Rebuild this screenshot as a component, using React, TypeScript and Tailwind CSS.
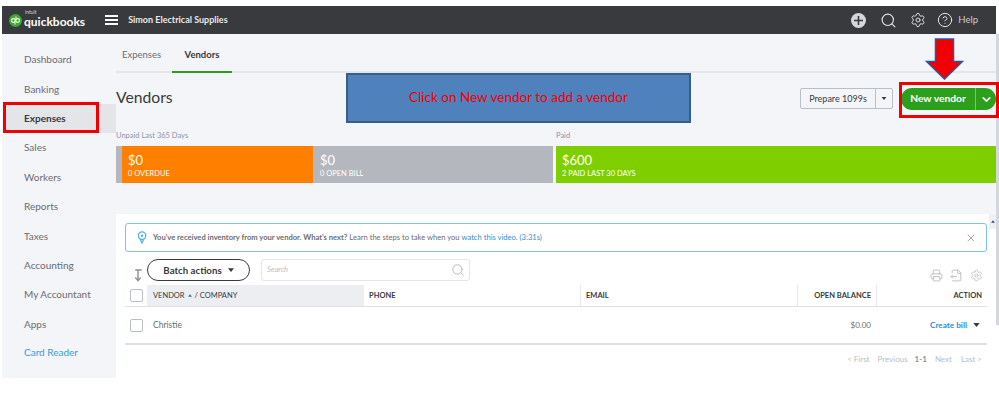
import { Search, Settings, CircleHelp, Printer, FileOutput, X, ChevronDown } from 'lucide-react';

const NAV_ITEMS = ['Dashboard', 'Banking', 'Expenses', 'Sales', 'Workers', 'Reports', 'Taxes', 'Accounting', 'My Accountant', 'Apps'];

const Caret = ({ className }: { className?: string }) => (
  <svg viewBox="0 0 8 5" className={className} fill="currentColor">
    <path d="M0 0h8L4 5z" />
  </svg>
);

const QbLogo = () => (
  <svg viewBox="0 0 16 16" className="h-[13px] w-[13px]">
    <circle cx="8" cy="8" r="8" fill="#3dab2b" />
    <circle cx="5.4" cy="8" r="2.3" fill="none" stroke="#fff" strokeWidth="1.3" />
    <circle cx="10.6" cy="8" r="2.3" fill="none" stroke="#fff" strokeWidth="1.3" />
    <path d="M7.4 8v5M8.6 3v5" stroke="#fff" strokeWidth="1.2" />
  </svg>
);

const PinIcon = () => (
  <svg viewBox="0 0 10 14" className="h-[13px] w-[10px]" fill="none" stroke="#4cb2ea" strokeWidth="1.3">
    <circle cx="5" cy="5" r="4" />
    <circle cx="5" cy="5" r="1.3" fill="#4cb2ea" stroke="none" />
    <path d="M3 8.5 5 13l2-4.5" />
  </svg>
);

const TopBar = () => (
  <header className="flex h-[28px] w-[994px] items-center bg-[#393a3d] text-white">
    <div className="ml-[7px] flex items-center">
      <QbLogo />
      <div className="-mt-[3px] ml-[2px] flex flex-col">
        <span className="ml-[1px] text-[5px] leading-[6px] text-[#d4d7dc]">intuit</span>
        <span className="text-[12px] leading-[14px] font-bold">quickbooks</span>
      </div>
    </div>
    <div className="ml-[20px] flex w-[13px] flex-col gap-[2px]">
      <span className="h-[2px] bg-white" />
      <span className="h-[2px] bg-white" />
      <span className="h-[2px] bg-white" />
    </div>
    <span className="ml-[10px] text-[9px] font-bold text-[#e8e9eb]">Simon Electrical Supplies</span>
    <div className="ml-auto flex items-center text-[#e3e5e8]">
      <span className="flex h-[15px] w-[15px] items-center justify-center rounded-full bg-[#d4d7dc]">
        <svg viewBox="0 0 9 9" className="h-[9px] w-[9px]">
          <path d="M4.5 0v9M0 4.5h9" stroke="#393a3d" strokeWidth="1.6" />
        </svg>
      </span>
      <Search className="ml-[14px] h-[17px] w-[17px]" strokeWidth={1.6} />
      <Settings className="ml-[13px] h-[16px] w-[16px]" strokeWidth={1.4} />
      <CircleHelp className="ml-[11px] h-[16px] w-[16px]" strokeWidth={1.5} />
      <span className="mr-[18px] ml-[5px] text-[9.5px] text-[#c9ccd1]">Help</span>
    </div>
  </header>
);

const Sidebar = () => (
  <aside className="h-[344px] w-[114px] shrink-0 bg-[#f4f5f8] pt-[11px] text-[10px] text-[#6b6c72]">
    {NAV_ITEMS.map((item) => (
      <div
        key={item}
        className={
          item === 'Expenses'
            ? 'ml-[2px] flex h-[29.4px] items-center bg-[#e3e5e8] pl-[20px] font-bold text-[#393a3d]'
            : 'flex h-[29.4px] items-center pl-[22px]'
        }
      >
        {item}
      </div>
    ))}
    <div className="flex h-[27px] items-center pl-[22px] text-[#3b99d9]">Card Reader</div>
  </aside>
);

const SummaryBars = () => (
  <div className="flex h-[37px] text-white">
    <div className="w-[6px] bg-[#b4b8be]" />
    <div className="w-[191px] bg-[#ff8000] pl-[6px]">
      <div className="pt-[6px] text-[13px] leading-[16px]">$0</div>
      <div className="text-[7.5px] leading-[11px]">0 OVERDUE</div>
    </div>
    <div className="w-[240px] bg-[#b4b8be] pl-[7px]">
      <div className="pt-[6px] text-[13px] leading-[16px]">$0</div>
      <div className="text-[7.5px] leading-[11px]">0 OPEN BILL</div>
    </div>
    <div className="ml-[3px] flex-1 bg-[#7fcf00] pl-[6px]">
      <div className="pt-[6px] text-[13px] leading-[16px]">$600</div>
      <div className="text-[7.5px] leading-[11px]">2 PAID LAST 30 DAYS</div>
    </div>
  </div>
);

const Checkbox = () => <span className="h-[13px] w-[13px] rounded-[2px] border border-[#babec5] bg-white" />;

const VendorTable = () => (
  <section className="h-[194px] w-[873px] shrink-0 bg-white pt-[9px]">
    <div className="ml-[9px] flex h-[29px] w-[862px] items-center rounded-[3px] border border-[#7cc4ef] pr-[9px] pl-[11px] text-[7.6px] text-[#6b6c72]">
      <PinIcon />
      <span className="ml-[6px] font-bold">You've received inventory from your vendor. What's next?</span>
      <span className="ml-[2px]">Learn the steps to take when you</span>
      <span className="ml-[2px] text-[#2f8fd1]">watch this video. (3:31s)</span>
      <X className="ml-auto h-[12px] w-[12px] text-[#8d9096]" strokeWidth={1.6} />
    </div>

    <div className="mt-[7px] flex h-[22px] items-start pl-[17px]">
      <svg viewBox="0 0 10 14" className="mt-[10px] h-[13px] w-[10px]" fill="none" stroke="#8d9096" strokeWidth="1.5">
        <path d="M2 1h7M5 1v11M2 9l3 3.5L8 9" />
      </svg>
      <div className="ml-[4px] flex h-[22px] w-[103px] items-center justify-center gap-[6px] rounded-full border border-[#393a3d] text-[9.7px] font-bold text-[#393a3d]">
        Batch actions
        <Caret className="h-[4px] w-[6px]" />
      </div>
      <div className="ml-[11px] flex h-[22px] w-[209px] items-center justify-between rounded-[3px] border border-[#e3e5e8] pr-[4px] pl-[5px] text-[7.5px] text-[#babec5] italic">
        Search
        <Search className="h-[14px] w-[14px] text-[#a8acb3]" strokeWidth={1.4} />
      </div>
      <div className="mt-[10px] mr-[6px] ml-auto flex gap-[7px] text-[#b4b8be]">
        <Printer className="h-[13px] w-[13px]" strokeWidth={1.6} />
        <FileOutput className="h-[13px] w-[13px]" strokeWidth={1.6} />
        <Settings className="h-[13px] w-[13px]" strokeWidth={1.4} />
      </div>
    </div>

    <div className="mt-[4px] ml-[9px] w-[862px]">
      <div className="grid h-[22px] grid-cols-[22px_217px_216px_217px_79px_111px] items-center border-b border-[#dfe1e5] text-[7.5px] font-bold text-[#393a3d]">
        <span className="flex pl-[5px]"><Checkbox /></span>
        <span className="flex h-full items-center gap-[3px] bg-[#eceef1] pl-[6px] font-normal">
          VENDOR
          <Caret className="h-[3px] w-[4px] rotate-180 text-[#2f6fa8]" />
          / COMPANY
        </span>
        <span className="flex h-full items-center pl-[5px]">PHONE</span>
        <span className="flex h-full items-center border-l border-[#e6e8eb] pl-[5px]">EMAIL</span>
        <span className="flex h-full items-center justify-end border-l border-[#e6e8eb] pr-[5px]">OPEN BALANCE</span>
        <span className="flex h-full items-center justify-end border-l border-[#e6e8eb] pr-[5px]">ACTION</span>
      </div>
      <div className="flex h-[38px] items-center border-b-2 border-[#dcdee1] text-[8.5px] text-[#6b6c72]">
        <span className="flex w-[28px] pl-[5px]"><Checkbox /></span>
        <span>Christie</span>
        <span className="ml-auto text-[8px]">$0.00</span>
        <span className="ml-[59px] text-[8.2px] font-bold text-[#2f8fd1]">Create bill</span>
        <Caret className="mr-[7px] ml-[6px] h-[4px] w-[7px] text-[#393a3d]" />
      </div>
      <div className="mt-[8px] flex justify-end pr-[5px] text-[8px] text-[#babec5]">
        <span>&lt; First</span>
        <span className="ml-[8px]">Previous</span>
        <span className="ml-[7px] font-bold text-[#8d9096]">1-1</span>
        <span className="ml-[8px]">Next</span>
        <span className="ml-[9px]">Last &gt;</span>
      </div>
    </div>
  </section>
);

export default function App() {
  return (
    <div className="relative h-[408px] w-[999px] overflow-hidden bg-white pt-[6px] pl-[2px] font-['Lato',sans-serif]">
      <TopBar />
      <div className="flex">
        <Sidebar />
        <main className="w-[880px] shrink-0">
          <div className="h-[180px] bg-[#f4f5f8]">
            <div className="flex h-[39px] items-end border-b-2 border-[#e3e5e8] pl-[6px] text-[9.5px]">
              <span className="-mb-[2px] w-[50px] pb-[11px] text-[#6b6c72]">Expenses</span>
              <span className="-mb-[2px] w-[60px] border-b-2 border-[#2ca01c] pb-[9px] text-center font-bold text-[#393a3d]">Vendors</span>
            </div>
            <div className="flex h-[40px] items-start justify-between pt-[15px]">
              <h1 className="-mt-[1px] text-[15.7px] leading-[20px] text-[#393a3d]">Vendors</h1>
              <div className="flex items-start">
                <div className="flex h-[21px] w-[93px] items-center rounded-[2px] border border-[#babec5] text-[9px] text-[#393a3d]">
                  <span className="flex h-full flex-1 items-center justify-center border-r border-[#babec5]">Prepare 1099s</span>
                  <span className="flex w-[16px] justify-center"><Caret className="h-[3px] w-[6px]" /></span>
                </div>
                <div className="ml-[8px] flex h-[22px] w-[95px] items-center rounded-full bg-[#2ca01c] text-[10.3px] font-bold text-white">
                  <span className="flex h-full flex-1 items-center justify-center border-r border-[#7cc46f]">New vendor</span>
                  <span className="flex w-[20px] justify-center"><ChevronDown className="h-[13px] w-[13px]" strokeWidth={3} /></span>
                </div>
              </div>
            </div>
            <div className="mt-[17px] flex h-[12px] text-[7.5px] leading-[12px] text-[#8d93ab]">
              <span className="w-[440px]">Unpaid Last 365 Days</span>
              <span>Paid</span>
            </div>
            <div className="mt-[4px]">
              <SummaryBars />
            </div>
          </div>
          <div className="flex">
            <VendorTable />
            <div className="flex h-[15px] w-[7px] items-center justify-end bg-[#eef0f5] pr-[1px]">
              <Caret className="h-[3px] w-[4px] rotate-180 text-[#2f5597]" />
            </div>
          </div>
        </main>
        <div className="h-[291px] w-[3px] bg-[#d4d7dc]" />
      </div>

      {/* annotations laid over the screenshot */}
      <div className="absolute top-[102px] left-[3px] h-[31px] w-[96px] border-[3px] border-[#f00000]" />
      <div className="absolute top-[82px] left-[899px] h-[36px] w-[100px] border-[3px] border-[#f00000]" />
      <div className="absolute top-[73px] left-[346px] flex h-[50px] w-[345px] items-center justify-center border-2 border-[#385d8a] bg-[#4f81bd] pb-[1px] text-[13.5px] text-[#f00000]">
        Click on New vendor to add a vendor
      </div>
      <svg viewBox="0 0 39 42" className="absolute top-[38px] left-[925px] h-[42px] w-[39px]">
        <path d="M10.5 1h18v22.5h9L19.5 41 1.5 23.5h9z" fill="#f00000" stroke="#2f5597" strokeWidth="1.5" />
      </svg>
    </div>
  );
}
